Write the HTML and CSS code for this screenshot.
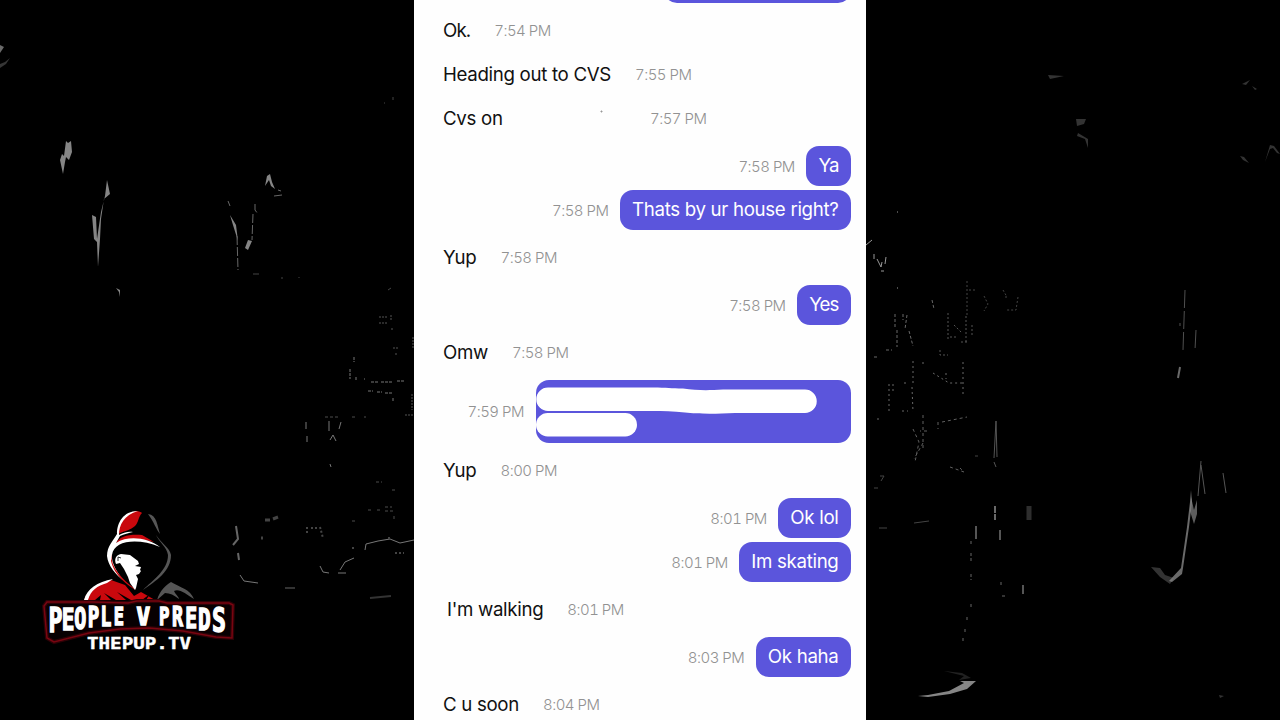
FILE: index.html
```html
<!DOCTYPE html>
<html lang="en">
<head>
    <meta charset="UTF-8">
    <meta name="viewport" content="width=device-width, initial-scale=1.0">
    <title>People v Preds</title>
    <link rel="stylesheet" href="styles.css">
</head>
<body>
    <svg class="backdrop" width="1280" height="720" viewBox="0 0 1280 720">
        <!-- left side scratches -->
        <g fill="#858585">
            <path d="M0 45l4 2-4 6z" opacity=".8"/>
            <path d="M0 64l5-2 5-4-4 6-6 4z" opacity=".4"/>
            <path d="M66 141l2 2 3-2 1 11-3 8-3-3-1 5-2 12-3-14 2-6 2 2z"/>
            <path d="M107 180l3 14-6 5-3 20-1 20-2 28-1-25-3-3-2-24 4 2 1 22 4-27 4-16z"/>
            <path d="M116 288l4 2 0 7-1-5z"/>
            <path d="M230 215l6 10 2 16-5-16zM248 240l4 1-4 9-3-2zM267 176l3-2 2 8 3 7-4-3-2-6-4 6z"/>
        </g>
        <g fill="none" stroke="#686868" stroke-width="1">
            <path d="M228 201l2 5M237 236l1 34M253 214l-1 26M255 204v6l3 4M274 196l8-1M278 190l3 1" stroke-dasharray="9 2"/>
            <path d="M253 274h6M282 277v2M299 277v1M388 290l3-2M384 103h1M393 97v3" stroke="#444"/>
            <path d="M236 526l2 13-5 6M238 553l1 7" stroke-width="2" stroke="#666"/>
            <path d="M240 575l4 6 14 2" stroke="#777"/>
            <path d="M265 520h5M278 517l-5 2M261 538h2" stroke-width="3" stroke="#444"/>
            <path d="M285 588h10M370 598l21-2" stroke="#333" stroke-width="2"/>
            <path d="M320 566l3 6 6 1M338 573h8M340 570l5-8 9-4M365 550l1-6 12-3 12-2 10 4 14-3" stroke="#777"/>
            <path d="M306 422v7M307 436v6M329 421v10M341 422l-2 7M330 440l3-5 3 6M330 464l1 3" stroke="#777"/>
            <path d="M350 369v10M354 357v5M356 377v3M364 379h1M371 382h8M381 382h12M397 381h8M368 391h5M377 392h5M385 393h8M393 398v4" stroke="#777" stroke-dasharray="3 1"/>
            <path d="M379 317h8M379 323h9M391 315v5M392 328v3M393 348h6M395 354h2M413 337v11M412 394v16M405 415h8" stroke="#555" stroke-dasharray="2 1"/>
            <path d="M352 417h4M364 417h2M325 417h14M376 482h6M392 490h3M368 510h3M377 510h3M385 507h7M385 511h8M394 516v3M352 521h3" stroke="#4d4d4d" stroke-dasharray="3 2"/>
            <path d="M307 527v6M320 527l3 11M311 528h8M352 548h4M395 553h9M389 537v3" stroke="#444" stroke-dasharray="2 2" stroke-width="2"/>
        </g>
        <!-- right side scratches -->
        <g fill="none" stroke="#696969" stroke-width="1">
            <path d="M866 245l6-5M874 254v5M877 259l4 8 1-5M886 257l-1 7M881 271h3M897 212h1M897 288h1" stroke="#999"/>
            <path d="M932 300l2 9M895 314v13M907 315l-2 14M897 330v17M909 331l4 15M886 350h6M874 357h5M903 314v6" stroke-dasharray="3 2"/>
            <path d="M967 281v35M969 290h7M984 296l4 8-4 7M1003 290l4 7h-4M1018 297l-2 13h-9" stroke="#444" stroke-dasharray="2 2"/>
            <path d="M948 313v28M966 316v26M954 325l8 8M950 337h7M961 342h6M972 325v12M940 350v5h8" stroke="#555" stroke-dasharray="2 2"/>
            <path d="M923 362v4M913 361v25M904 383h5M912 387l1 25M893 384v8M889 384v30M902 411h6M877 419h4M946 373v6M933 373l16 10h16M963 362v34" stroke-dasharray="2 3"/>
            <path d="M923 415v36M913 429l6 13-4 20M927 431h-7M923 443l-9 16M938 422v7M942 422l25-5M950 467l14 5-4-4" stroke="#606060" stroke-dasharray="3 3"/>
            <path d="M994 458l2-37 1 36M994 462l2 5" stroke="#555"/>
            <path d="M995 506v14" stroke-width="2" stroke-dasharray="7 1"/>
            <path d="M1000 530v10M976 526v13M1023 585v9" stroke="#555" stroke-width="2"/>
            <path d="M971 541v5M971 553v10M971 574v6M971 604v5M967 617v5M965 629v5M963 638v3M1001 582v5M1002 596h3" stroke="#666" stroke-dasharray="3 2"/>
            <path d="M880 476h4l-3 5M874 488h4M879 528h8M914 523l15-2M975 456h3" stroke="#444"/>
            <path d="M1029 506v14" stroke="#2e2e2e" stroke-width="5"/>
            <path d="M1185 290l-1 30-1 30M1196 330l-1 20M1180 323v3" stroke="#505050" stroke-dasharray="18 3"/>
            <path d="M1178 378l2-11" stroke-width="2"/>
            <path d="M1201 461l-3 35M1201 465l4 29M1223 473l3 20" stroke="#555"/>
        </g>
        <g fill="#858585">
            <path d="M1191 490l1 12-3 25-6 41-1 6-10 8-3-1 12-13 6-41 3-25z" opacity=".8"/>
            <path d="M1191 497l3 13 3-10 0 14-3 10-4-13z" opacity=".7"/>
            <path d="M1151 567l9 1 5 7 9 3-4 6-10-7z" opacity=".38"/>
            <path d="M918 696l10-1 21-4 15-8-4-2h16l-9 8-17 5-22 3z"/>
            <path d="M944 671l18 2 9 5-12 2 5-4z" opacity=".25"/>
        </g>
        <g fill="#333">
            <path d="M1048 75l16 1-14 3zM1076 119h10l-2 5-7 2zM1078 133l10 6v9l-3-9-8-3zM1242 84l8-4-4 5zM1252 86l5 3-2 1zM1240 156l4 1 5 6-6-3z"/>
            <path d="M1265 162l5-17 4 1 6 8-3-1-4-5-3 1zM1219 695l5 1-4 2z"/>
        </g>
    </svg>

    <svg class="logo" width="215" height="160" viewBox="30 500 215 160">
        <!-- hooded figure -->
        <path d="M84 600c3-9 10-15 27-20l14 5 9 11 7-4 14 8z" fill="#c9080d"/>
        <path d="M84 600c3-11 13-18 29-21l-6 4c-10 3-16 7-19 17z" fill="#fff"/>
        <path d="M95 600l6-5-1 5zM111 600l-7-7 12 7zM126 600l-9-8 14 8zM142 600l8-6-4 6z" fill="#000"/>
        <path d="M115 542c0-16 8-28 21-31 9-2 17 3 18 10l6 13 10 20c2 14-16 33-30 38-14-7-28-19-32-36 1-7 5-9 7-14z" fill="#000"/>
        <path d="M118 534c2-13 8-21 18-23 3 0 5 1 6 2-4 4-3 9-7 13-4 4-11 5-17 8zM116 543c4-7 13-9 26-8l12 7c-13-4-25-3-38 1z" fill="#c9080d"/>
        <path d="M138 511c-15 0-21 12-21 23-4 7-10 12-10 22 1 10 9 19 17 25-7-9-13-18-12-26 2-15 26-17 48-8-12-9-31-12-44-4l4-7c4-2 9-3 13-4-5-1-10 1-14 3 0-10 5-20 19-24z" fill="#fff"/>
        <path d="M111 554c0 14 11 25 25 36-8-4-22-15-25-29z" fill="#c9080d"/>
        <path d="M121 554l9 1 8 6 1 3-4 2 6 1-1 3 1 1-2 3-3 1 2 4-2 9-1 2-5-7-2-6-4-8-4-6-4 1c-2-5 0-9 5-10z" fill="#fff"/>
        <path d="M118 561v-4l3 1" fill="none" stroke="#000" stroke-width=".8"/>
        <path d="M148 514c9 1 9 11 12 20-4-5-6-12-12-20zM156 535c5 8 14 13 15 20 0 16-15 26-28 35 10-10 25-20 25-35-1-8-9-13-12-20z" fill="#565656"/>
        <path d="M157 600c3-10 9-15 14-18 10 6 19 7 23 17-8-5-15-11-20-8 2 4 5 6 5 8-5-4-9-6-14-6z" fill="#555"/>
        <!-- name plate -->
        <path d="M47 602h46l35 1 9-2h22l8 2h62l4 2-1 33-16-1-33-6-34-3-29 1-31 4-35 9-7-4-3-32z" fill="#080002" stroke="#2c0206" stroke-width="4"/>
        <path d="M47 602h46l35 1 9-2h22l8 2h62l4 2-1 33-16-1-33-6-34-3-29 1-31 4-35 9-7-4-3-32z" fill="none" stroke="#790511" stroke-width="1.5"/>
        <g class="logo-name">
            <text transform="translate(48.5 0) scale(.68 1)"><tspan x="0" y="632.5" font-size="34">P</tspan><tspan x="19.6" y="630.5" font-size="31">E</tspan><tspan x="38" y="629" font-size="29.5">O</tspan><tspan x="57.6" y="627.5" font-size="28">P</tspan><tspan x="76.5" y="626" font-size="26.5">L</tspan><tspan x="96" y="625" font-size="25">E</tspan></text>
            <text transform="translate(136.5 0) scale(.94 1)" y="625" font-size="24">V</text>
            <text transform="translate(159 0) scale(.68 1)"><tspan x="0" y="625.5" font-size="25.5">P</tspan><tspan x="19" y="626.5" font-size="27">R</tspan><tspan x="38.5" y="628.5" font-size="29">E</tspan><tspan x="57.5" y="630.5" font-size="31">D</tspan><tspan x="78" y="632.5" font-size="34">S</tspan></text>
            <text class="logo-site" x="87" y="649" font-size="16" textLength="104" lengthAdjust="spacingAndGlyphs">THEPUP.TV</text>
        </g>
    </svg>

    <div class="chat">
        <div class="group sent">
            <div class="message"><div class="bubble bubble-cut"></div></div>
        </div>
        <div class="group received">
            <div class="message"><div class="bubble tight">Ok.</div><span class="time">7:54 PM</span></div>
            <div class="message"><div class="bubble">Heading out to CVS</div><span class="time">7:55 PM</span></div>
            <div class="message"><div class="bubble bubble-place">Cvs on</div><span class="time">7:57 PM</span></div>
        </div>
        <div class="group sent">
            <div class="message"><span class="time">7:58 PM</span><div class="bubble tight">Ya</div></div>
            <div class="message"><span class="time">7:58 PM</span><div class="bubble">Thats by ur house right?</div></div>
        </div>
        <div class="group received">
            <div class="message"><div class="bubble">Yup</div><span class="time">7:58 PM</span></div>
        </div>
        <div class="group sent">
            <div class="message"><span class="time">7:58 PM</span><div class="bubble tight">Yes</div></div>
        </div>
        <div class="group received">
            <div class="message"><div class="bubble">Omw</div><span class="time">7:58 PM</span></div>
        </div>
        <div class="group sent">
            <div class="message">
                <span class="time">7:59 PM</span>
                <div class="bubble bubble-hidden">
                    <svg width="315" height="63" viewBox="0 0 315 63">
                        <path d="M12 7.5h105c14 0 18 1 30 1 14 2 25 2 40 1h82a11.75 11.75 0 0 1 0 23.5h-70c-20 1-38 1-50-.5-12-1.500-22-1.500-32-1.500H12a11.75 11.75 0 0 1 0-23.5z" fill="#fff"/>
                        <rect x="0" y="33" width="101" height="23.5" rx="11.7" fill="#fff"/>
                    </svg>
                </div>
            </div>
        </div>
        <div class="group received">
            <div class="message"><div class="bubble">Yup</div><span class="time">8:00 PM</span></div>
        </div>
        <div class="group sent">
            <div class="message"><span class="time">8:01 PM</span><div class="bubble">Ok lol</div></div>
            <div class="message"><span class="time">8:01 PM</span><div class="bubble">Im skating</div></div>
        </div>
        <div class="group received">
            <div class="message indent"><div class="bubble">I'm walking</div><span class="time">8:01 PM</span></div>
        </div>
        <div class="group sent">
            <div class="message"><span class="time">8:03 PM</span><div class="bubble">Ok haha</div></div>
        </div>
        <div class="group received">
            <div class="message"><div class="bubble">C u soon</div><span class="time">8:04 PM</span></div>
        </div>
    </div>
</body>
</html>
```
FILE: styles.css
```css
* {
    box-sizing: border-box;
}
body {
    margin: 0;
    height: 720px;
    overflow: hidden;
    background-color: #000;
    font-family: Inter, "Liberation Sans", sans-serif;
}
.backdrop {
    position: absolute;
    top: 0;
    left: 0;
}
.logo {
    position: absolute;
    top: 500px;
    left: 30px;
}
.logo-name {
    font-family: "DejaVu Sans Mono", monospace;
    font-weight: bold;
    fill: #fff;
    stroke: #fff;
    stroke-width: 1.5px;
}
.logo-site {
    stroke-width: 0.4px;
}
.chat {
    position: relative;
    display: flex;
    flex-direction: column;
    gap: 7.5px;
    width: 452px;
    height: 720px;
    margin: 0 auto;
    padding: 0 15.5px 0 17px;
    background-color: #fefefe;
    overflow: hidden;
}
.group {
    display: flex;
    flex-direction: column;
    flex-shrink: 0;
    gap: 4px;
}
.group:first-child {
    margin-top: -37px;
}
.message {
    display: flex;
    align-items: center;
    gap: 12px;
}
.sent .message {
    justify-content: flex-end;
}
.bubble {
    height: 40px;
    padding: 0 12px;
    border-radius: 13px;
    font-size: 18.7px;
    line-height: 39.5px;
    letter-spacing: -0.32px;
    white-space: nowrap;
    color: #111;
}
.sent .bubble {
    background-color: #5b55dc;
    color: #fff;
}
.tight {
    letter-spacing: -0.9px;
}
.bubble-cut {
    width: 187px;
}
.bubble-place {
    width: 207px;
    background: radial-gradient(circle at 170.5px 12.5px, #999 0.8px, transparent 1.2px);
}
.sent .bubble-hidden {
    width: 315px;
    height: 63px;
    padding: 0;
    overflow: hidden;
}
.bubble-hidden svg {
    display: block;
}
.indent {
    padding-left: 4px;
}
.time {
    width: 56px;
    font-size: 15px;
    font-weight: 300;
    font-variant-numeric: tabular-nums;
    letter-spacing: -0.53px;
    white-space: nowrap;
    color: #929292;
}
```
